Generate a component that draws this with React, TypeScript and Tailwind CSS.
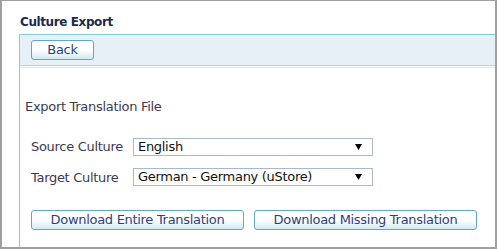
const font = { fontFamily: '"DejaVu Sans", Verdana, sans-serif' };

function Btn({ label, w }: { label: string; w: string }) {
  return (
    <button
      className={`${w} h-[20px] rounded-[3px] border border-[#5fa8c8] bg-gradient-to-b from-white via-white to-[#d3e9f1] text-[13px] leading-[18px] tracking-[-0.3px] text-[#2d3f82]`}
    >
      {label}
    </button>
  );
}

function Dropdown({ value }: { value: string }) {
  return (
    <div className="flex h-[18px] w-[240px] items-center justify-between border border-[#a9b9cc] bg-white pl-[4px] pr-[10px] text-[13px] leading-[16px] tracking-[-0.3px] text-[#111]">
      <span>{value}</span>
      <svg width="7" height="6" viewBox="0 0 7 6">
        <path d="M0 0h7L3.5 6z" fill="#000" />
      </svg>
    </div>
  );
}

export default function App() {
  return (
    <div
      style={font}
      className="h-[249px] w-[497px] overflow-hidden border-b-2 border-l-2 border-r-2 border-t border-[#a0a0a0] bg-white"
    >
      {/* title */}
      <div className="h-[33px] pl-[18px] pt-[13px] text-[12px] font-bold leading-[16px] tracking-[-0.4px] text-[#1b2a4e]">
        Culture Export
      </div>

      <div className="ml-[17px] h-full border-l border-t border-[#7ccfdc]">
        {/* toolbar */}
        <div className="flex h-[31px] items-center border-b border-[#a8dce8] bg-[#e8f0f7] pl-[11px]">
          <Btn label="Back" w="w-[63px]" />
        </div>
        <div className="mt-[1px] h-px bg-[#d4eef4]" />

        <div className="pl-[11px] pt-[31px] text-[13px] tracking-[-0.3px] text-[#3b3a52]">
          <div className="-ml-[6px] leading-[16px]">Export Translation File</div>

          <div className="mt-[22px] flex flex-col gap-[11px]">
            <div className="flex items-center">
              <span className="w-[102px]">Source Culture</span>
              <Dropdown value="English" />
            </div>
            <div className="flex items-center">
              <span className="w-[102px]">Target Culture</span>
              <Dropdown value="German - Germany (uStore)" />
            </div>
          </div>

          <div className="mt-[23px] flex gap-[10px]">
            <Btn label="Download Entire Translation" w="w-[213px]" />
            <Btn label="Download Missing Translation" w="w-[223px]" />
          </div>
        </div>
      </div>
    </div>
  );
}
